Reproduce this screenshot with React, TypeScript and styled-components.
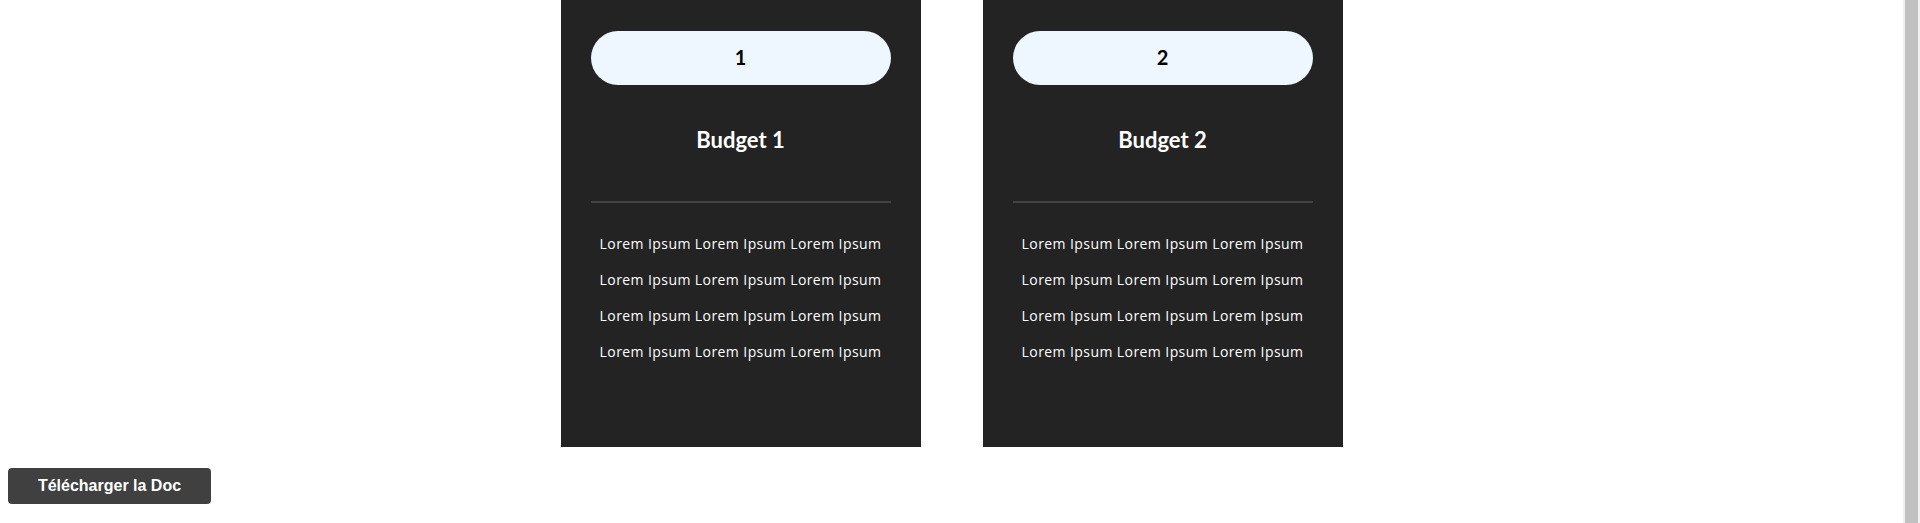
import React from "react";
import styled, { createGlobalStyle } from "styled-components";

const Global = createGlobalStyle`
  html, body { margin: 0; padding: 0; background: #ffffff; overflow: hidden; }
  body { font-family: "Lato", "Open Sans", sans-serif; }
`;

const Shell = styled.div`
  display: flex;
  height: 523px;
`;

const Page = styled.div`
  flex: 1;
  display: flex;
  flex-direction: column;
  padding: 0 0 0 8px;
`;

const Row = styled.div`
  display: flex;
  justify-content: center;
  gap: 62px;
  margin-left: -8px;
`;

const ScrollTrack = styled.div`
  width: 17px;
  background: #f1f1f1;
  display: flex;
  justify-content: center;
  padding: 0 2px;
  box-sizing: border-box;
`;

const ScrollThumb = styled.div`
  flex: 1;
  background: #c1c1c1;
`;

const Card = styled.div`
  width: 360px;
  height: 447px;
  box-sizing: border-box;
  background: #232323;
  padding: 31px 30px 0;
  display: flex;
  flex-direction: column;
  align-items: stretch;
`;

const Pill = styled.div`
  height: 54px;
  box-sizing: border-box;
  padding-bottom: 3px;
  border-radius: 27px;
  background: #eef6ff;
  color: #000;
  display: flex;
  align-items: center;
  justify-content: center;
  font-family: "Lato", sans-serif;
  font-weight: 700;
  font-size: 20px;
`;

const Title = styled.h2`
  margin: 40px 0 0;
  height: 30px;
  line-height: 30px;
  text-align: center;
  color: #fff;
  font-family: "Lato", sans-serif;
  font-weight: 700;
  font-size: 22px;
`;

const Divider = styled.hr`
  margin: 46px 0 0;
  border: none;
  height: 2px;
  background: #444444;
`;

const List = styled.div`
  margin-top: 23px;
  display: flex;
  flex-direction: column;
`;

const Line = styled.p`
  margin: 0;
  height: 36px;
  line-height: 36px;
  text-align: center;
  color: #fff;
  font-family: "Open Sans", sans-serif;
  font-size: 14px;
  letter-spacing: 0.42px;
  white-space: nowrap;
`;

const Download = styled.button`
  align-self: flex-start;
  margin-top: 21px;
  width: 203px;
  height: 36px;
  border: none;
  border-radius: 4px;
  background: #404040;
  color: #fff;
  font-family: "Liberation Sans", Arial, sans-serif;
  font-weight: 700;
  font-size: 16px;
  cursor: pointer;
`;

const budgets = [1, 2];
const lines = [0, 1, 2, 3];

export default function App() {
  return (
    <>
      <Global />
      <Shell>
        <Page>
          <Row>
            {budgets.map((n) => (
              <Card key={n}>
                <Pill>{n}</Pill>
                <Title>Budget {n}</Title>
                <Divider />
                <List>
                  {lines.map((i) => (
                    <Line key={i}>Lorem Ipsum Lorem Ipsum Lorem Ipsum</Line>
                  ))}
                </List>
              </Card>
            ))}
          </Row>
          <Download>Télécharger la Doc</Download>
        </Page>
        <ScrollTrack>
          <ScrollThumb />
        </ScrollTrack>
      </Shell>
    </>
  );
}
